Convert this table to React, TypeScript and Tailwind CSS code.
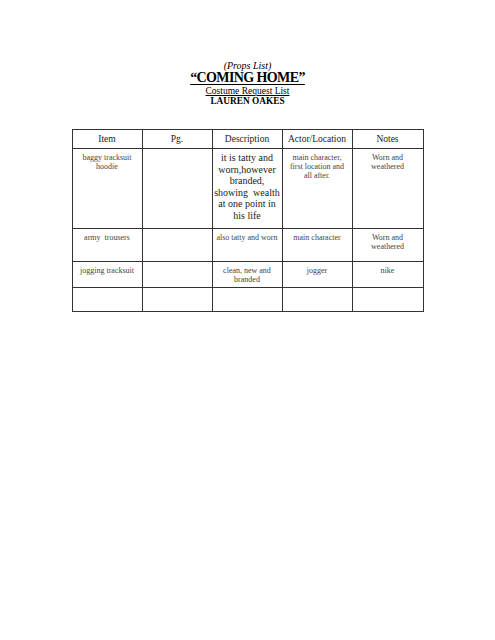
import React from 'react';

type Row = {
  item: string[];
  pg: string[];
  desc: string[];
  actor: string[];
  notes: string[];
  big?: boolean;
  h: string;
};

const rows: Row[] = [
  {
    item: ['baggy tracksuit', 'hoodie'],
    pg: [],
    desc: ['it is tatty and', 'worn,however', 'branded,', 'showing  wealth', 'at one point in', 'his life'],
    actor: ['main character,', 'first location and', 'all after.'],
    notes: ['Worn and', 'weathered'],
    big: true,
    h: 'h-[80px]',
  },
  {
    item: ['army  trousers'],
    pg: [],
    desc: ['also tatty and worn'],
    actor: ['main character'],
    notes: ['Worn and', 'weathered'],
    h: 'h-[33px]',
  },
  {
    item: ['jogging tracksuit'],
    pg: [],
    desc: ['clean, new and', 'branded'],
    actor: ['jogger'],
    notes: ['nike'],
    h: 'h-[26px]',
  },
  {
    item: [],
    pg: [],
    desc: [],
    actor: [],
    notes: [],
    h: 'h-[24px]',
  },
];

function Cell({ lines, big }: { lines: string[]; big?: boolean }) {
  return (
    <td className={`border border-[#333] align-top text-center px-0 ${big ? 'pt-[3px]' : 'pt-[4px]'}`}>
      {lines.map((l, i) => (
        <div
          key={i}
          className={
            big
              ? 'whitespace-pre text-[10px] leading-[11.5px] text-[#222]'
              : 'whitespace-pre text-[8px] leading-[9px] text-[#444]'
          }
        >
          {l}
        </div>
      ))}
    </td>
  );
}

export default function App() {
  return (
    <div className="w-[495px] h-[640px] bg-white font-['Liberation_Serif',serif] text-black">
      <div className="pt-[60px] flex flex-col items-center">
        <div className="italic text-[10px] leading-[11px]">(Props List)</div>
        <div className="font-bold text-[14px] leading-[13px] tracking-[-0.6px] underline decoration-1 underline-offset-[2px]">
          “COMING HOME”
        </div>
        <div className="text-[9.5px] leading-[10px] mt-[2px] underline decoration-1 underline-offset-[1px]">
          Costume Request List
        </div>
        <div className="font-bold text-[9.3px] leading-[10px]">LAUREN OAKES</div>
      </div>

      <table className="mt-[23px] mx-auto table-fixed border-collapse w-[351px]">
        <colgroup>
          <col className="w-[70px]" />
          <col className="w-[70px]" />
          <col className="w-[70px]" />
          <col className="w-[70px]" />
          <col className="w-[71px]" />
        </colgroup>
        <thead>
          <tr className="h-[19px]">
            {['Item', 'Pg.', 'Description', 'Actor/Location', 'Notes'].map((h) => (
              <th
                key={h}
                className="border border-[#333] font-normal text-[9.5px] leading-[10px] text-[#222] align-middle"
              >
                {h}
              </th>
            ))}
          </tr>
        </thead>
        <tbody>
          {rows.map((r, i) => (
            <tr key={i} className={r.h}>
              <Cell lines={r.item} />
              <Cell lines={r.pg} />
              <Cell lines={r.desc} big={r.big} />
              <Cell lines={r.actor} />
              <Cell lines={r.notes} />
            </tr>
          ))}
        </tbody>
      </table>
    </div>
  );
}
